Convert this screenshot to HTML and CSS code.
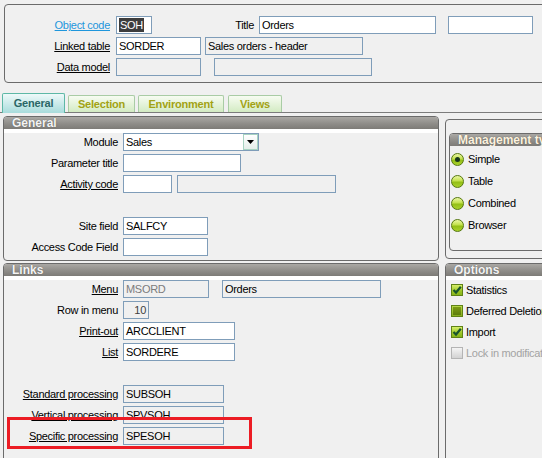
FILE: index.html
```html
<!DOCTYPE html>
<html>
<head>
<meta charset="utf-8">
<link rel="stylesheet" href="styles.css">
</head>
<body>
<div class="hdr">
  <div class="row">
    <span class="lbl lt u blue">Object code</span>
    <span class="fld w36"><span class="seltxt">SOH</span></span>
    <span class="lbl ltitle">Title</span>
    <span class="fld w177">Orders</span>
    <span class="fld w85 ml12"></span>
  </div>
  <div class="row">
    <span class="lbl lt u">Linked table</span>
    <span class="fld w85">SORDER</span>
    <span class="fld ro w158 ml4">Sales orders - header</span>
  </div>
  <div class="row">
    <span class="lbl lt u">Data model</span>
    <span class="fld ro w85"></span>
    <span class="fld ro w158 ml13"></span>
  </div>
</div>

<div class="tabs">
  <div class="tab on tw1">General</div>
  <div class="tab tw2">Selection</div>
  <div class="tab tw3">Environment</div>
  <div class="tab tw4">Views</div>
</div>

<div class="main">
  <div class="col-l">
    <div class="panel gen">
      <div class="ph">General</div>
      <div class="row">
        <span class="lbl lg">Module</span>
        <span class="fld w136 selfld"><span class="stxt">Sales</span><span class="dd"><svg width="7" height="4" viewBox="0 0 7 4"><path d="M0 0H7L3.5 4Z" fill="#000"/></svg></span></span>
      </div>
      <div class="row">
        <span class="lbl lg">Parameter title</span>
        <span class="fld w118"></span>
      </div>
      <div class="row">
        <span class="lbl lg u">Activity code</span>
        <span class="fld w49"></span>
        <span class="fld ro w159 ml5"></span>
      </div>
      <div class="row"></div>
      <div class="row">
        <span class="lbl lg">Site field</span>
        <span class="fld w85">SALFCY</span>
      </div>
      <div class="row">
        <span class="lbl lg">Access Code Field</span>
        <span class="fld w85"></span>
      </div>
    </div>

    <div class="panel links">
      <div class="ph">Links</div>
      <div class="row">
        <span class="lbl lg u">Menu</span>
        <span class="fld ro dim w86">MSORD</span>
        <span class="fld ro w159 ml13">Orders</span>
      </div>
      <div class="row">
        <span class="lbl lg">Row in menu</span>
        <span class="fld ro num w26">10</span>
      </div>
      <div class="row">
        <span class="lbl lg u">Print-out</span>
        <span class="fld w112">ARCCLIENT</span>
      </div>
      <div class="row">
        <span class="lbl lg u">List</span>
        <span class="fld w112">SORDERE</span>
      </div>
      <div class="row"></div>
      <div class="row">
        <span class="lbl lg u">Standard processing</span>
        <span class="fld ro w101">SUBSOH</span>
      </div>
      <div class="row">
        <span class="lbl lg u">Vertical processing</span>
        <span class="fld ro w101">SPVSOH</span>
      </div>
      <div class="row">
        <span class="lbl lg u">Specific processing</span>
        <span class="fld ro w101">SPESOH</span>
      </div>
    </div>
  </div>

  <div class="col-r">
    <div class="panel mouter">
      <div class="panel mgmt">
        <div class="ph nostrip">Management type</div>
        <div class="rlist">
          <div class="rrow"><span class="radio on"></span><span>Simple</span></div>
          <div class="rrow"><span class="radio"></span><span>Table</span></div>
          <div class="rrow"><span class="radio"></span><span>Combined</span></div>
          <div class="rrow"><span class="radio"></span><span>Browser</span></div>
        </div>
      </div>
    </div>
    <div class="panel opts">
      <div class="ph">Options</div>
      <div class="clist">
        <div class="crow"><span class="cb"><svg width="10" height="10" viewBox="0 0 10 10"><path d="M1.5 5 L4 7.5 L8.8 1.8" fill="none" stroke="#17542c" stroke-width="2.2"/></svg></span><span>Statistics</span></div>
        <div class="crow"><span class="cb ind"><span class="indbar"></span></span><span>Deferred Deletion</span></div>
        <div class="crow"><span class="cb"><svg width="10" height="10" viewBox="0 0 10 10"><path d="M1.5 5 L4 7.5 L8.8 1.8" fill="none" stroke="#17542c" stroke-width="2.2"/></svg></span><span>Import</span></div>
        <div class="crow dis"><span class="cb off"></span><span>Lock in modification</span></div>
      </div>
    </div>
  </div>
</div>

<div class="hl"></div>
</body>
</html>
```

FILE: styles.css
```css
html, body {
  margin: 0;
  padding: 0;
  overflow: hidden;
}
body {
  background: #f0f0f0;
  font-family: "Liberation Sans", Arial, sans-serif;
  font-size: 11px;
  color: #000;
  width: 542px;
  height: 458px;
  position: relative;
  letter-spacing: -0.3px;
}

/* header panel */
.hdr {
  margin: 4px 0 0 4px;
  width: 600px;
  height: 60px;
  padding: 11px 0 6px 0;
  border: 1px solid #6b6b6b;
  border-radius: 4px;
}

.row {
  display: flex;
  align-items: center;
  height: 18px;
}
.row + .row { margin-top: 3px; }

.lbl {
  flex: none;
  box-sizing: border-box;
  text-align: right;
  white-space: nowrap;
  line-height: 18px;
}
.lbl.u { text-decoration: underline; }
.lbl.blue { color: #1e96dc; }
.lt { width: 111px; padding-right: 6px; }
.ltitle { width: 107px; padding-right: 5px; }
.lg { width: 119px; padding-right: 5px; }

.fld {
  flex: none;
  box-sizing: border-box;
  height: 18px;
  border: 1px solid #7f9db9;
  background: #fff;
  line-height: 16px;
  padding: 0 2px;
  white-space: nowrap;
  overflow: hidden;
}
.fld.ro { background: #f0f0f0; }
.fld.dim { color: #7c7c7c; }
.fld.num { text-align: right; color: #404040; }

.seltxt {
  display: inline-block;
  background: #3d3d3d;
  color: #fff;
  line-height: 14px;
  padding: 0 1px;
  margin-top: 1px;
}

.w26 { width: 26px; }
.w36 { width: 36px; }
.w49 { width: 49px; }
.w85 { width: 85px; }
.w86 { width: 86px; }
.w101 { width: 101px; }
.w112 { width: 112px; }
.w118 { width: 118px; }
.w136 { width: 136px; }
.w158 { width: 158px; }
.w159 { width: 159px; }
.w177 { width: 177px; }
.ml4 { margin-left: 4px; }
.ml5 { margin-left: 5px; }
.ml12 { margin-left: 12px; }
.ml13 { margin-left: 13px; }

.selfld {
  display: flex;
  align-items: center;
  padding: 0 0 0 2px;
}
.stxt { flex: 1; }
.dd {
  width: 15px;
  height: 16px;
  box-sizing: border-box;
  border: 1px solid #a7d3c1;
  background: linear-gradient(#ffffff, #e4eeea);
  display: flex;
  align-items: center;
  justify-content: center;
}

/* tabs */
.tabs {
  display: flex;
  align-items: flex-end;
  height: 19px;
  margin-top: 10px;
  padding-left: 2px;
  border-bottom: 1px solid #7c7c7c;
}
.tab {
  flex: none;
  box-sizing: border-box;
  height: 17px;
  margin-right: 3px;
  font-weight: bold;
  font-size: 11px;
  letter-spacing: -0.2px;
  text-align: center;
  line-height: 16px;
  border: 1px solid #a9cca5;
  border-bottom: none;
  border-radius: 2px 2px 0 0;
  background: linear-gradient(#f7fcf2, #d3ebc3);
  color: #a2a214;
}
.tab.on {
  height: 20px;
  margin-bottom: -1px;
  line-height: 19px;
  border-color: #5db8a6;
  background: linear-gradient(#eef9f9, #a8dcdc);
  color: #2a6666;
}
.tw1 { width: 63px; }
.tw2 { width: 67px; }
.tw3 { width: 86px; margin-right: 4px; }
.tw4 { width: 54px; }

/* main */
.main {
  display: flex;
  padding-left: 3px;
}
.col-l { flex: none; width: 436px; }
.col-r { flex: none; width: 130px; margin-left: 6px; }

.panel {
  box-sizing: border-box;
  border: 1px solid #6b6b6b;
  border-radius: 4px;
}
.gen { margin-top: 3px; height: 145px; }
.links { margin-top: 2px; height: 220px; }

.ph {
  height: 12px;
  border-bottom: 4px solid #fff;
  border-radius: 3px 3px 0 0;
  background: linear-gradient(#aaa8a4, #8f8d89 55%, #7d7b77);
  color: #f4f4f4;
  font-weight: bold;
  font-size: 12px;
  letter-spacing: 0;
  line-height: 12px;
  padding-left: 8px;
  white-space: nowrap;
  overflow: hidden;
  text-shadow: 0 0 1px #555;
}
.ph.nostrip { border-bottom: none; color: #fcf2de; }

/* right column */
.mouter { margin-top: 6px; height: 140px; }
.mgmt {
  margin: 13px 0 0 3px;
  height: 118px;
}
.rlist { padding-top: 2px; }
.rrow {
  display: flex;
  align-items: center;
  height: 22px;
  padding-left: 1px;
  white-space: nowrap;
}
.radio {
  flex: none;
  box-sizing: border-box;
  width: 13px;
  height: 13px;
  margin-right: 4px;
  border-radius: 50%;
  border: 1px solid #56780f;
  background: linear-gradient(#eaf7a4 0%, #c2e04a 45%, #93bf16 55%, #a9d12c 100%);
  position: relative;
}
.radio.on::after {
  content: "";
  position: absolute;
  left: 3px;
  top: 3px;
  width: 5px;
  height: 5px;
  border-radius: 50%;
  background: #17361c;
}

.opts { margin-top: 4px; height: 220px; }
.clist { margin-top: -1px; }
.crow {
  display: flex;
  align-items: center;
  height: 21px;
  padding-left: 5px;
  white-space: nowrap;
}
.crow.dis { color: #a3a3a3; }
.cb {
  flex: none;
  box-sizing: border-box;
  width: 12px;
  height: 12px;
  margin-right: 3px;
  border: 1px solid #5f8216;
  background: linear-gradient(#d6ef6a, #9cc626 60%, #86b41a);
  display: flex;
  align-items: center;
  justify-content: center;
}
.cb.ind {
  background: linear-gradient(#b6d848, #86ac1c);
}
.indbar {
  width: 8px;
  height: 8px;
  background: linear-gradient(#7c9c14, #5d7c0c);
}
.cb.off {
  border-color: #b4b4b4;
  background: linear-gradient(#f4f4f4, #d2d2d2);
}

/* red highlight overlay */
.hl {
  position: absolute;
  left: 7px;
  top: 417px;
  width: 245px;
  height: 32px;
  box-sizing: border-box;
  border: 3px solid #ec1c24;
}
```
